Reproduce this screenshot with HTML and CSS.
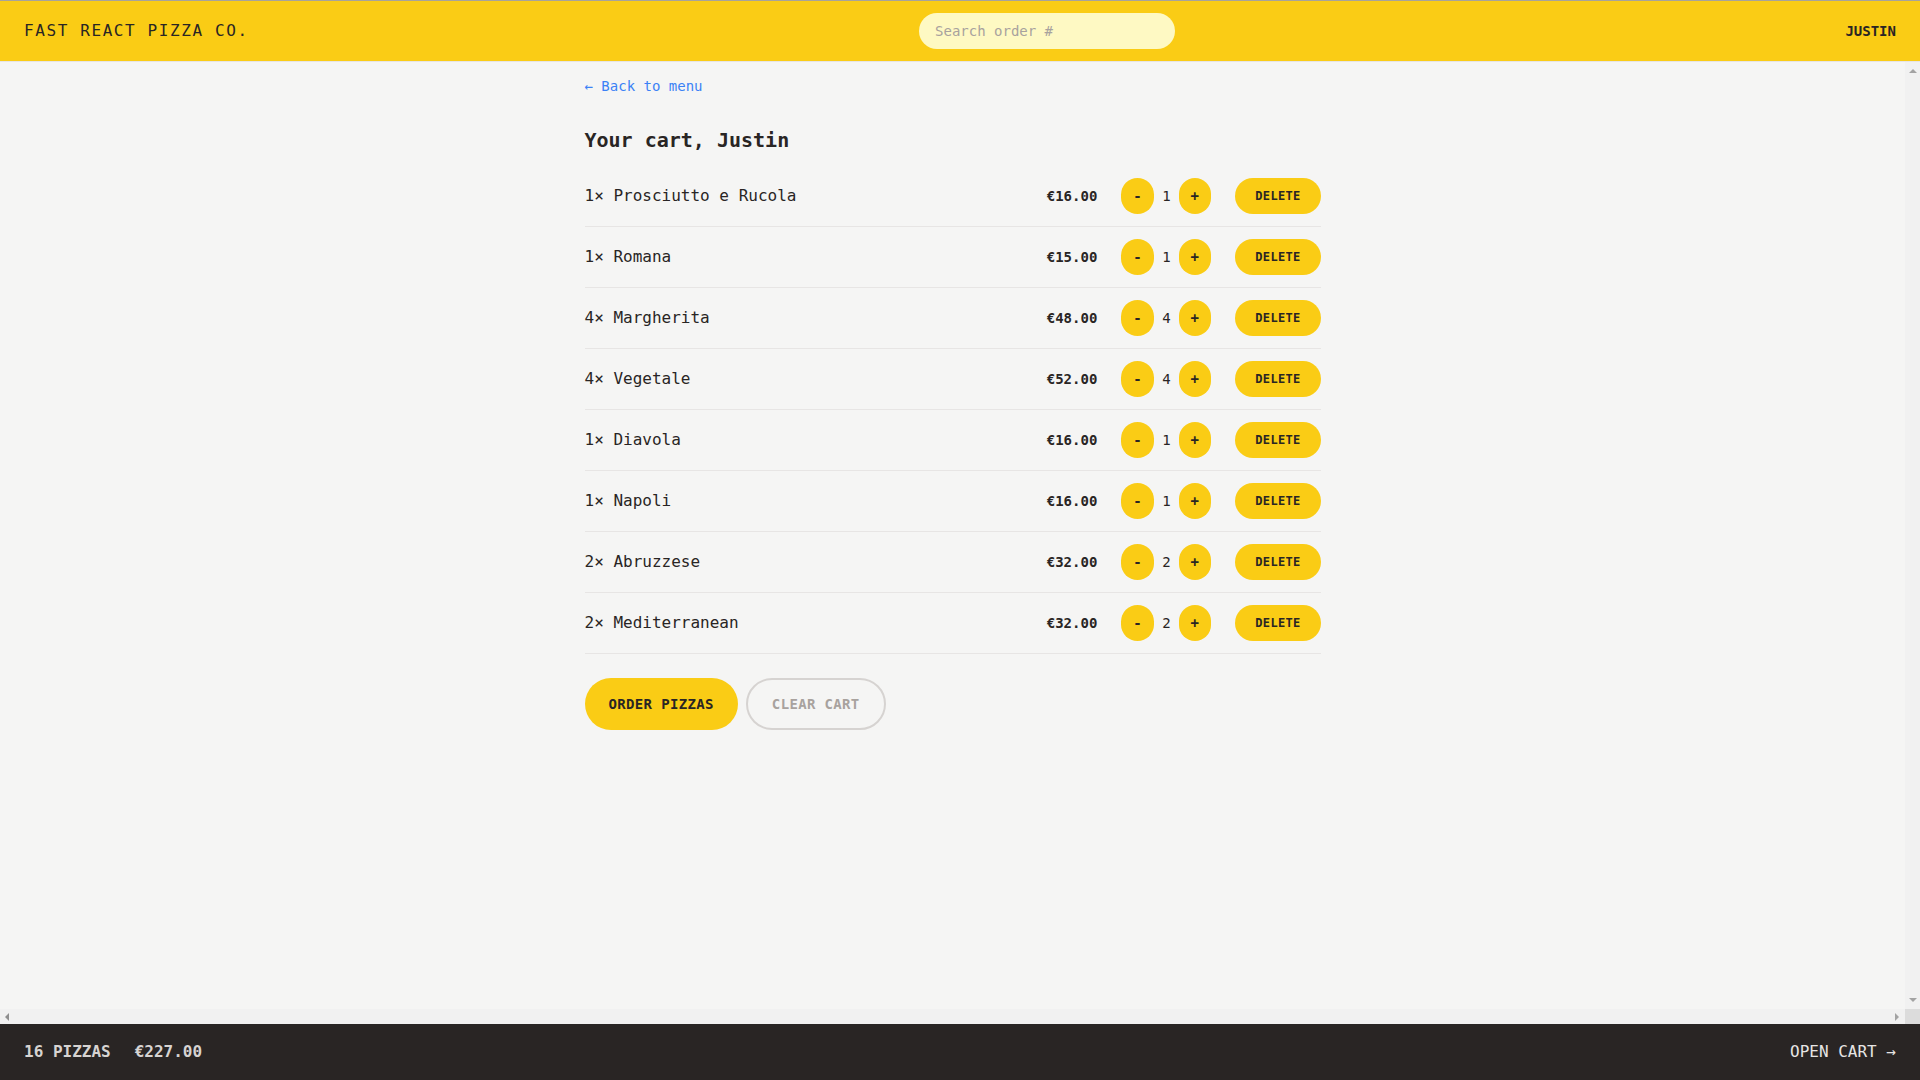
FILE: index.html
```html
<!DOCTYPE html>
<html lang="en">
<head>
<meta charset="utf-8">
<title>Fast React Pizza Co.</title>
<link rel="stylesheet" href="styles.css">
</head>
<body>
<div class="app">
  <header class="header">
    <a class="logo" href="#">Fast React Pizza Co.</a>
    <form class="search-form"><input class="search" type="text" placeholder="Search order #"></form>
    <div class="username">Justin</div>
  </header>
  <div class="body-area">
    <div class="scroller">
      <main class="main">
        <div class="cart">
          <a class="back-link" href="#">&larr; Back to menu</a>
          <h2 class="cart-title">Your cart, Justin</h2>
          <ul class="cart-list">
            <li class="cart-item"><p class="item-name">1&times; Prosciutto e Rucola</p><div class="item-actions"><p class="item-price">€16.00</p><div class="qty"><button class="btn btn-round">-</button><span class="qty-num">1</span><button class="btn btn-round">+</button></div><button class="btn btn-small">Delete</button></div></li>
            <li class="cart-item"><p class="item-name">1&times; Romana</p><div class="item-actions"><p class="item-price">€15.00</p><div class="qty"><button class="btn btn-round">-</button><span class="qty-num">1</span><button class="btn btn-round">+</button></div><button class="btn btn-small">Delete</button></div></li>
            <li class="cart-item"><p class="item-name">4&times; Margherita</p><div class="item-actions"><p class="item-price">€48.00</p><div class="qty"><button class="btn btn-round">-</button><span class="qty-num">4</span><button class="btn btn-round">+</button></div><button class="btn btn-small">Delete</button></div></li>
            <li class="cart-item"><p class="item-name">4&times; Vegetale</p><div class="item-actions"><p class="item-price">€52.00</p><div class="qty"><button class="btn btn-round">-</button><span class="qty-num">4</span><button class="btn btn-round">+</button></div><button class="btn btn-small">Delete</button></div></li>
            <li class="cart-item"><p class="item-name">1&times; Diavola</p><div class="item-actions"><p class="item-price">€16.00</p><div class="qty"><button class="btn btn-round">-</button><span class="qty-num">1</span><button class="btn btn-round">+</button></div><button class="btn btn-small">Delete</button></div></li>
            <li class="cart-item"><p class="item-name">1&times; Napoli</p><div class="item-actions"><p class="item-price">€16.00</p><div class="qty"><button class="btn btn-round">-</button><span class="qty-num">1</span><button class="btn btn-round">+</button></div><button class="btn btn-small">Delete</button></div></li>
            <li class="cart-item"><p class="item-name">2&times; Abruzzese</p><div class="item-actions"><p class="item-price">€32.00</p><div class="qty"><button class="btn btn-round">-</button><span class="qty-num">2</span><button class="btn btn-round">+</button></div><button class="btn btn-small">Delete</button></div></li>
            <li class="cart-item"><p class="item-name">2&times; Mediterranean</p><div class="item-actions"><p class="item-price">€32.00</p><div class="qty"><button class="btn btn-round">-</button><span class="qty-num">2</span><button class="btn btn-round">+</button></div><button class="btn btn-small">Delete</button></div></li>
          </ul>
          <div class="cart-buttons">
            <a class="btn btn-primary" href="#">Order pizzas</a><button class="btn-secondary">Clear cart</button>
          </div>
        </div>
      </main>
    </div>
    <div class="vbar"><span class="arrow-up"></span><span class="arrow-down"></span></div>
    <div class="hbar"><span class="arrow-left"></span><span class="arrow-right"></span></div>
    <div class="corner"></div>
  </div>
  <footer class="footer">
    <div class="footer-summary"><span>16 pizzas</span><span>€227.00</span></div>
    <a class="open-cart" href="#">Open cart &rarr;</a>
  </footer>
</div>
</body>
</html>
```
FILE: styles.css
```css
* { box-sizing: border-box; margin: 0; padding: 0; }
html, body {
  height: 100%;
}
body {
  font-family: "DejaVu Sans Mono", monospace;
  font-size: 16px;
  line-height: 1.5;
  color: #292524;
  background: #f5f5f4;
}
a { color: inherit; text-decoration: none; }
button, input { font-family: inherit; font-size: 100%; line-height: inherit; color: inherit; border: 0; background: none; }
ul { list-style: none; }

.app {
  display: grid;
  height: 100vh;
  grid-template-rows: auto 1fr auto;
}

.header {
  display: flex;
  align-items: center;
  justify-content: space-between;
  border-top: 1px solid #a8a39a;
  border-bottom: 1px solid #e7e5e4;
  background: #facc15;
  padding: 12px 24px;
  text-transform: uppercase;
}
.logo { letter-spacing: 0.1em; }
.search {
  display: block;
  width: 256px;
  border-radius: 9999px;
  background: #fef9c3;
  padding: 8px 16px;
  font-size: 14px;
  line-height: 20px;
  outline: none;
}
.search::placeholder { color: #a8a29e; }
.username { font-size: 14px; line-height: 20px; font-weight: 700; }

.body-area {
  display: grid;
  grid-template-columns: 1fr 15px;
  grid-template-rows: 1fr 15px;
  min-height: 0;
}
.scroller { overflow: auto; min-height: 0; }
.vbar {
  display: flex;
  flex-direction: column;
  align-items: center;
  justify-content: space-between;
  padding: 7px 0;
  background: #f1f1f1;
}
.hbar {
  display: flex;
  align-items: center;
  justify-content: space-between;
  padding: 0 6px 0 5px;
  background: #f1f1f1;
}
.corner { background: #dcdcdc; }
.arrow-up {
  width: 0; height: 0;
  border-left: 4px solid transparent;
  border-right: 4px solid transparent;
  border-bottom: 4px solid #a3a3a3;
}
.arrow-down {
  width: 0; height: 0;
  border-left: 4px solid transparent;
  border-right: 4px solid transparent;
  border-top: 4px solid #a3a3a3;
}
.arrow-left {
  width: 0; height: 0;
  border-top: 4px solid transparent;
  border-bottom: 4px solid transparent;
  border-right: 4px solid #8f8f8f;
}
.arrow-right {
  width: 0; height: 0;
  border-top: 4px solid transparent;
  border-bottom: 4px solid transparent;
  border-left: 4px solid #a3a3a3;
}

.main { max-width: 768px; margin: 0 auto; }
.cart { padding: 12px 16px; }
.back-link { font-size: 14px; line-height: 20px; color: #3b82f6; }
.cart-title { margin-top: 28px; font-size: 20px; line-height: 28px; font-weight: 700; }
.cart-list { margin-top: 12px; border-bottom: 1px solid #e7e5e4; }
.cart-item {
  display: flex;
  align-items: center;
  justify-content: space-between;
  padding: 12px 0;
}
.cart-item + .cart-item { border-top: 1px solid #e7e5e4; }
.item-actions { display: flex; align-items: center; justify-content: space-between; gap: 24px; }
.item-price { font-size: 14px; line-height: 20px; font-weight: 700; }
.qty { display: flex; align-items: center; gap: 8px; }
.qty-num { font-size: 14px; line-height: 20px; }

.btn {
  display: inline-block;
  font-size: 14px;
  line-height: 20px;
  border-radius: 9999px;
  background: #facc15;
  font-weight: 700;
  text-transform: uppercase;
  letter-spacing: 0.025em;
  color: #292524;
  cursor: pointer;
}
.btn-round { padding: 8px 12px; }
.btn-small { padding: 10px 20px; font-size: 12px; line-height: 16px; }
.btn-primary { padding: 16px 24px; }
.btn-secondary {
  display: inline-block;
  margin-left: 8px;
  font-size: 14px;
  line-height: 20px;
  border-radius: 9999px;
  border: 2px solid #d6d3d1;
  font-weight: 700;
  text-transform: uppercase;
  letter-spacing: 0.025em;
  color: #a8a29e;
  padding: 14px 24px;
  cursor: pointer;
}
.cart-buttons { margin-top: 24px; }

.footer {
  display: flex;
  align-items: center;
  justify-content: space-between;
  background: #292524;
  padding: 16px 24px;
  text-transform: uppercase;
  color: #e7e5e4;
}
.footer-summary { display: flex; gap: 24px; font-weight: 700; color: #d6d3d1; }
```
